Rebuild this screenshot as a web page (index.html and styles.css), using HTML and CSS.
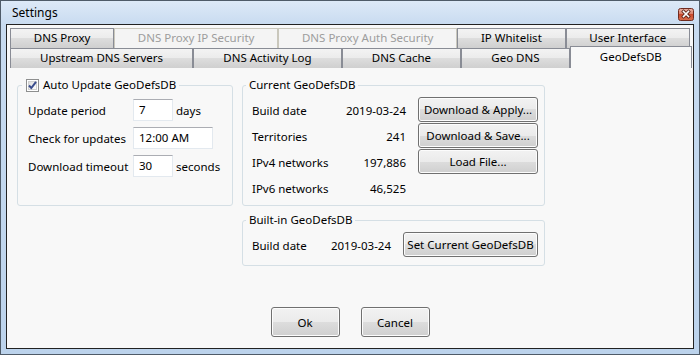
FILE: index.html
```html
<!DOCTYPE html>
<html lang="en">
<head>
    <meta charset="UTF-8">
    <title>Settings</title>
    <link rel="stylesheet" href="styles.css">
</head>
<body>

    <div class="window">
        <div class="titlebar">
            <span class="title">Settings</span>
            <span class="close">
                <svg width="16" height="13" viewBox="0 0 16 13">
                    <defs>
                        <linearGradient id="red" x1="0" y1="0" x2="0" y2="1">
                            <stop offset="0" stop-color="#eab3a6"/>
                            <stop offset="0.5" stop-color="#d87a63"/>
                            <stop offset="0.5" stop-color="#c9492d"/>
                            <stop offset="1" stop-color="#d9704f"/>
                        </linearGradient>
                    </defs>
                    <rect x="0.5" y="0.5" width="15" height="12" rx="2" fill="url(#red)" stroke="#6f2b1f"/>
                    <path d="M5.5 3.5 L10.5 8.5 M10.5 3.5 L5.5 8.5" stroke="#5a2318" stroke-width="3.2" stroke-linecap="square"/>
                    <path d="M5.5 3.5 L10.5 8.5 M10.5 3.5 L5.5 8.5" stroke="#fff" stroke-width="1.6" stroke-linecap="square"/>
                </svg>
            </span>
        </div>

        <div class="client">
            <!-- tab headers, two wrapped rows -->
            <div class="tabs">
                <div class="tab-row">
                    <div class="tab">DNS Proxy</div>
                    <div class="tab disabled">DNS Proxy IP Security</div>
                    <div class="tab disabled">DNS Proxy Auth Security</div>
                    <div class="tab">IP Whitelist</div>
                    <div class="tab">User Interface</div>
                </div>
                <div class="tab-row">
                    <div class="tab">Upstream DNS Servers</div>
                    <div class="tab">DNS Activity Log</div>
                    <div class="tab">DNS Cache</div>
                    <div class="tab">Geo DNS</div>
                    <div class="tab selected">GeoDefsDB</div>
                </div>
            </div>

            <div class="panel">
                <fieldset class="group">
                    <legend>
                        <span class="check">
                            <svg width="13" height="13" viewBox="0 0 13 13">
                                <defs>
                                    <linearGradient id="box" x1="0" y1="0" x2="1" y2="1">
                                        <stop offset="0" stop-color="#dcdcdc"/>
                                        <stop offset="1" stop-color="#ffffff"/>
                                    </linearGradient>
                                </defs>
                                <rect x="0.5" y="0.5" width="12" height="12" fill="#fff" stroke="#8e8f8f"/>
                                <rect x="2.5" y="2.5" width="8" height="8" fill="url(#box)" stroke="#d0d0d0"/>
                                <path d="M3 6.5 L5.3 9 L10 2.8" fill="none" stroke="#3a4c8c" stroke-width="2"/>
                            </svg>
                        </span>
                        Auto Update GeoDefsDB
                    </legend>
                    <div class="form-grid">
                        <span>Update period</span>
                        <span class="field">
                            <span class="textbox short">7</span>
                            <span>days</span>
                        </span>

                        <span>Check for updates</span>
                        <span class="field">
                            <span class="textbox long">12:00 AM</span>
                        </span>

                        <span>Download timeout</span>
                        <span class="field">
                            <span class="textbox short">30</span>
                            <span>seconds</span>
                        </span>
                    </div>
                </fieldset>

                <fieldset class="group">
                    <legend>Current GeoDefsDB</legend>
                    <div class="info-grid">
                        <span>Build date</span>
                        <span class="value">2019-03-24</span>
                        <button class="btn">Download &amp; Apply...</button>

                        <span>Territories</span>
                        <span class="value">241</span>
                        <button class="btn">Download &amp; Save...</button>

                        <span>IPv4 networks</span>
                        <span class="value">197,886</span>
                        <button class="btn">Load File...</button>

                        <span>IPv6 networks</span>
                        <span class="value">46,525</span>
                        <span></span>
                    </div>
                </fieldset>

                <fieldset class="group builtin">
                    <legend>Built-in GeoDefsDB</legend>
                    <div class="info-grid wide">
                        <span>Build date</span>
                        <span class="value">2019-03-24</span>
                        <button class="btn">Set Current GeoDefsDB</button>
                    </div>
                </fieldset>
            </div>

            <div class="footer">
                <button class="btn dialog-btn">Ok</button>
                <button class="btn dialog-btn">Cancel</button>
            </div>
        </div>
    </div>

</body>
</html>
```

FILE: styles.css
```css
*{
    box-sizing: border-box;
}

body{
    margin: 0;
    font-family: "Noto Sans", "Liberation Sans", sans-serif;
    font-size: 11.5px;
    color: #000;
}

.window{
    display: flex;
    flex-direction: column;
    width: 700px;
    height: 355px;
    padding: 0 5px 5px;
    border: 1px solid #4f5b68;
    background: linear-gradient(#dde9f7, #c8dbf0 24px, #bcd3ec);
}

.titlebar{
    display: flex;
    align-items: center;
    justify-content: space-between;
    height: 23px;
    padding-left: 6px;
}

.title{
    font-size: 12px;
}

.close{
    display: flex;
    margin-top: 3px;
}

.client{
    display: flex;
    flex-direction: column;
    flex: 1;
    border: 1px solid #222;
    background: #f8f8f8;
}

/* tabs */
.tabs{
    padding: 3px 3px 0;
}

.tab-row{
    display: flex;
    height: 20px;
}

.tab{
    flex: 1 1 auto;
    border: 1px solid #898c95;
    border-bottom: 0;
    background: linear-gradient(#f3f3f3, #ebebeb 50%, #dddddd 50%, #cfcfcf);
    text-align: center;
    line-height: 18px;
    white-space: nowrap;
}

.tab.disabled{
    border-color: #c9c7bc;
    background: #f4f4f4;
    color: #9d9d9d;
}

.tab.selected{
    position: relative;
    height: 22px;
    margin-top: -2px;
    margin-right: -2px;
    background: #f8f8f8;
    line-height: 19px;
}

/* tab content */
.panel{
    display: grid;
    grid-template-columns: 216px 303px;
    grid-template-rows: auto auto;
    column-gap: 9px;
    row-gap: 6px;
    align-content: start;
    flex: 1;
    padding: 9px 0 0 10px;
}

.group{
    margin: 0;
    padding: 4px 6px 4px 9px;
    border: 1px solid #d5dfe5;
    border-radius: 3px;
    min-width: 0;
}

.group legend{
    display: flex;
    align-items: center;
    margin-left: -6px;
    padding: 0 3px;
    line-height: 16px;
}

.group:first-child{
    padding: 6px 0 0 10px;
}

.group.builtin{
    grid-column: 2;
    padding-bottom: 7px;
}

.check{
    display: flex;
    margin: 0 4px 0 1px;
}

.form-grid{
    display: grid;
    grid-template-columns: 105px 1fr;
    grid-auto-rows: 22px;
    row-gap: 6px;
    align-items: center;
    white-space: nowrap;
}

.field{
    display: flex;
    align-items: center;
    gap: 3px;
}

.textbox{
    height: 22px;
    padding-left: 5px;
    border: 1px solid #e3e9ef;
    border-top-color: #abadb3;
    background: #fff;
    line-height: 20px;
}

.textbox.short{
    width: 40px;
}

.textbox.long{
    width: 80px;
}

.info-grid{
    display: grid;
    grid-template-columns: 1fr auto 120px;
    grid-auto-rows: 26px;
    align-items: center;
}

.info-grid.wide{
    grid-template-columns: 1fr auto 135px;
}

.value{
    padding-right: 12px;
    text-align: right;
}

.btn{
    height: 25px;
    padding: 0;
    border: 1px solid #707070;
    border-radius: 3px;
    background: linear-gradient(#f2f2f2, #ebebeb 50%, #dddddd 50%, #cfcfcf);
    box-shadow: inset 0 0 0 1px #fcfcfc;
    font-family: inherit;
    font-size: 11.5px;
    color: #000;
    align-self: start;
}

/* dialog buttons */
.footer{
    display: flex;
    justify-content: center;
    gap: 21px;
    padding-bottom: 11px;
}

.dialog-btn{
    width: 69px;
    height: 30px;
}
```
